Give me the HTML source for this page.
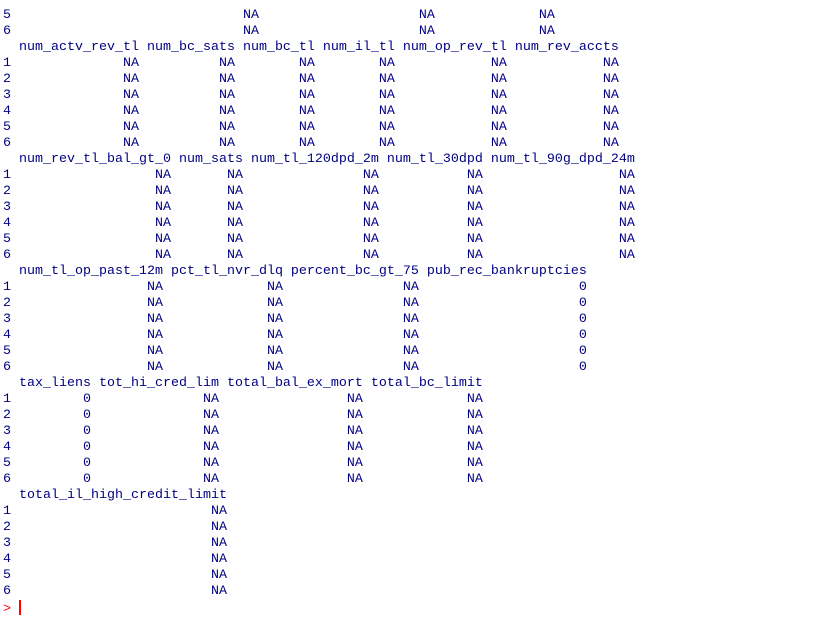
<!DOCTYPE html>
<html><head><meta charset="utf-8"><style>
html,body{margin:0;padding:0;background:#fff;width:819px;height:621px;overflow:hidden}
pre{margin:0;position:absolute;left:3px;top:8px;font-family:"Liberation Mono",monospace;font-size:13.33px;line-height:16px;color:#000080}
.r{color:#ff0000}
.cur{display:inline-block;width:2px;height:15px;background:#ff0000;vertical-align:-3px}
</style></head><body><pre>5                             NA                    NA             NA
6                             NA                    NA             NA
  num_actv_rev_tl num_bc_sats num_bc_tl num_il_tl num_op_rev_tl num_rev_accts
1              NA          NA        NA        NA            NA            NA
2              NA          NA        NA        NA            NA            NA
3              NA          NA        NA        NA            NA            NA
4              NA          NA        NA        NA            NA            NA
5              NA          NA        NA        NA            NA            NA
6              NA          NA        NA        NA            NA            NA
  num_rev_tl_bal_gt_0 num_sats num_tl_120dpd_2m num_tl_30dpd num_tl_90g_dpd_24m
1                  NA       NA               NA           NA                 NA
2                  NA       NA               NA           NA                 NA
3                  NA       NA               NA           NA                 NA
4                  NA       NA               NA           NA                 NA
5                  NA       NA               NA           NA                 NA
6                  NA       NA               NA           NA                 NA
  num_tl_op_past_12m pct_tl_nvr_dlq percent_bc_gt_75 pub_rec_bankruptcies
1                 NA             NA               NA                    0
2                 NA             NA               NA                    0
3                 NA             NA               NA                    0
4                 NA             NA               NA                    0
5                 NA             NA               NA                    0
6                 NA             NA               NA                    0
  tax_liens tot_hi_cred_lim total_bal_ex_mort total_bc_limit
1         0              NA                NA             NA
2         0              NA                NA             NA
3         0              NA                NA             NA
4         0              NA                NA             NA
5         0              NA                NA             NA
6         0              NA                NA             NA
  total_il_high_credit_limit
1                         NA
2                         NA
3                         NA
4                         NA
5                         NA
6                         NA
<span class="r">&gt; </span><span class="cur"></span></pre></body></html>
